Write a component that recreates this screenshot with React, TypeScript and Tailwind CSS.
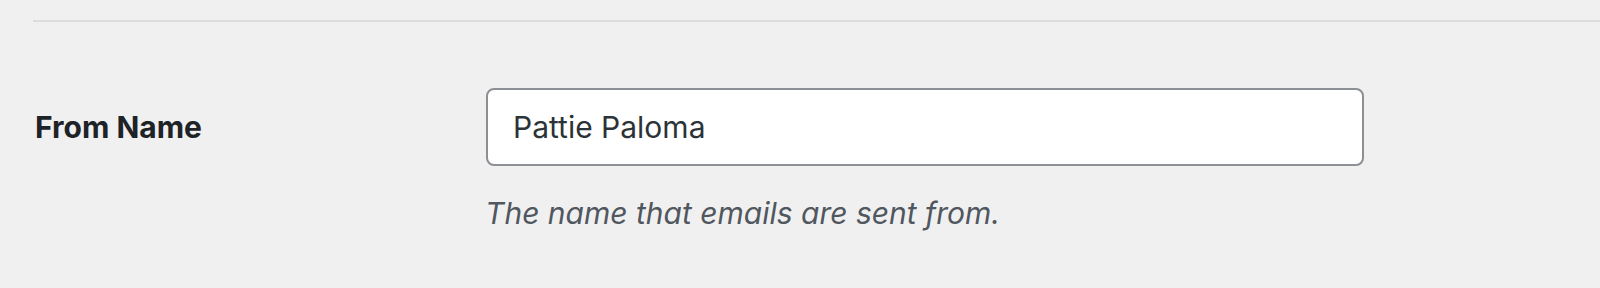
export default function App() {
  return (
    <div className="min-h-[288px] w-full bg-[#f0f0f1] pl-[33px] pt-[20px] font-['Inter',sans-serif]">
      <div className="h-[2px] w-full bg-[#dcdcde]" />
      <div className="mt-[66px] flex items-center">
        <label className="w-[453px] pl-[2px] text-[30px] font-bold text-[#1d2327]">
          From Name
        </label>
        <input
          type="text"
          readOnly
          value="Pattie Paloma"
          className="h-[78px] w-[878px] rounded-[8px] border-2 border-[#8c8f94] bg-white px-[25px] text-[30px] text-[#2c3338] outline-none"
        />
      </div>
      <p className="ml-[452px] mt-[25px] text-[30px] italic leading-[45px] text-[#50575e]">
        The name that emails are sent from.
      </p>
    </div>
  );
}
